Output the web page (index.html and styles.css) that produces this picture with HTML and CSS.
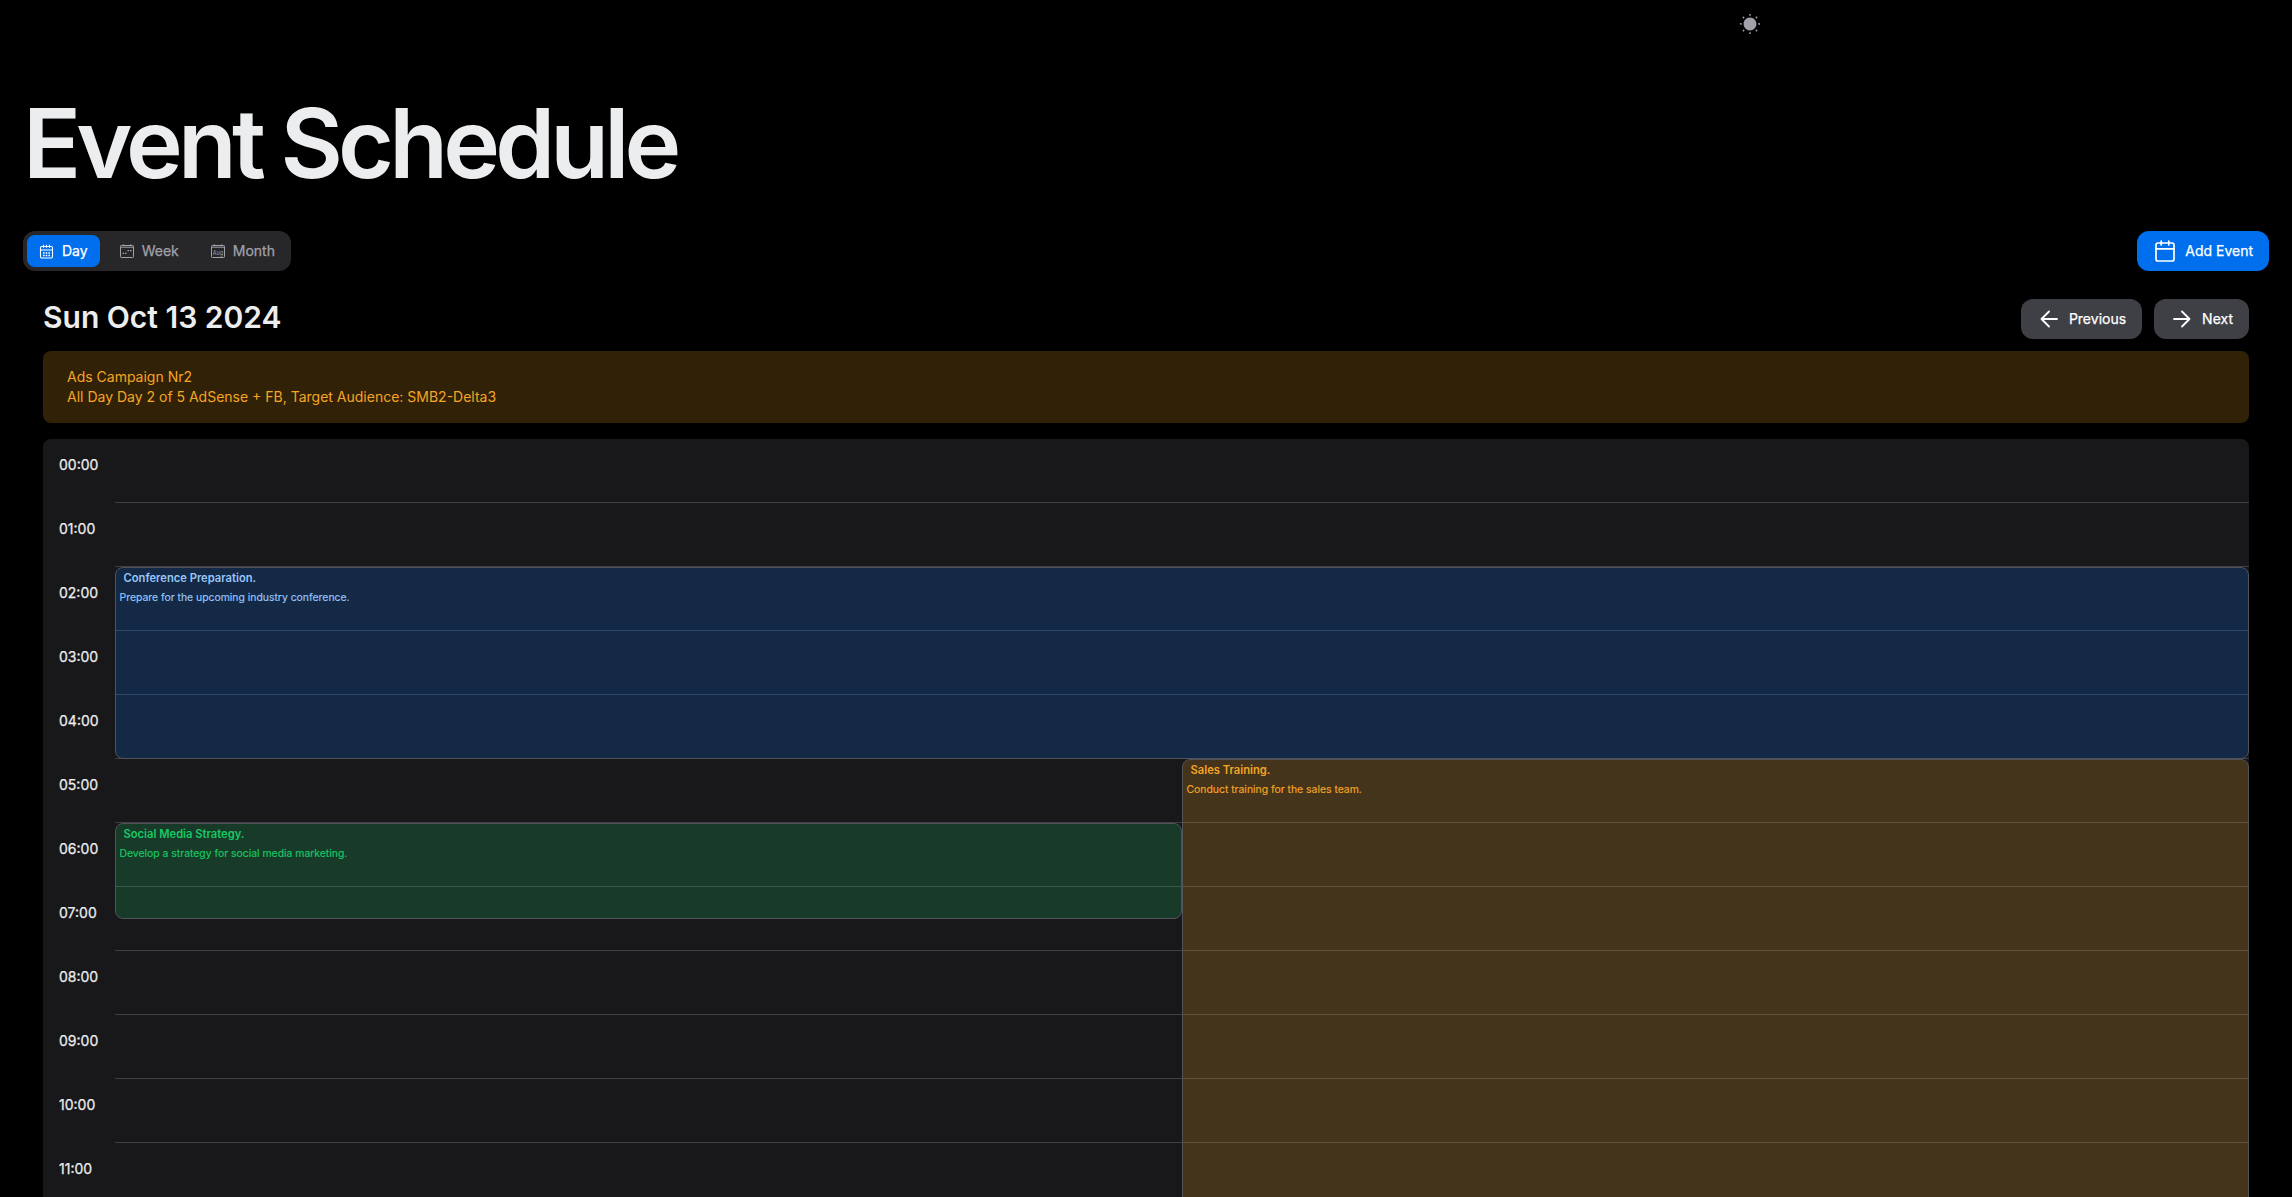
FILE: index.html
```
<!DOCTYPE html>
<html lang="en">
<head>
<meta charset="utf-8">
<title>Event Schedule</title>
<link rel="stylesheet" href="styles.css">
</head>
<body>
<header class="topbar">
  <svg class="sun" viewBox="0 0 24 24" width="22" height="22"><path d="M19 12c0 3.87-3.13 7-7 7s-7-3.13-7-7 3.130-7 7-7 7 3.130 7 7zM12 22.960c-.55 0-1-.41-1-.96v-.08c0-.55.45-1 1-1s1 .45 1 1-.45 1.040-1 1.040zm7.140-2.820c-.26 0-.51-.1-.71-.29l-.13-.13a.996.996 0 1 1 1.410-1.410l.13.13a.996.996 0 0 1-.7 1.700zm-14.280 0c-.26 0-.51-.1-.71-.29a.996.996 0 0 1 0-1.410l.13-.13a.996.996 0 1 1 1.410 1.410l-.13.13c-.19.19-.45.29-.7.29zM22 13h-.08c-.55 0-1-.45-1-1s.45-1 1-1 1.040.45 1.040 1-.41 1-.96 1zM2.080 13H2c-.55 0-1-.45-1-1s.45-1 1-1 1.040.45 1.040 1-.41 1-.96 1zm16.930-7.010c-.26 0-.51-.1-.71-.29a.996.996 0 0 1 0-1.410l.13-.13a.996.996 0 1 1 1.410 1.410l-.13.13c-.19.19-.44.29-.7.29zm-14.020 0c-.26 0-.51-.1-.71-.29l-.13-.14a.996.996 0 1 1 1.410-1.410l.13.13c.39.39.39 1.020 0 1.410-.19.2-.45.3-.7.3zM12 3.040c-.55 0-1-.41-1-.96V2c0-.55.45-1 1-1s1 .45 1 1-.45 1.040-1 1.040z" fill="currentColor"/></svg>
</header>
<main class="page">
  <h1 class="title">Event Schedule</h1>
  <div class="toolbar">
    <div class="tabs">
      <button class="tab active">
        <svg class="tab-icon day-icon" viewBox="0 0 15 15" fill="none" stroke="currentColor" stroke-width="1.100"><rect x="1.500" y="2.500" width="12" height="11.500" rx="1.200"/><path d="M1.500 6h12M4.500 .8v3M7.500 .8v3M10.500 .8v3"/><path d="M4 9h1.600M6.700 9h1.600M9.400 9H11M4 11.500h1.600M6.700 11.500h1.600M9.400 11.500H11" stroke-width="1.300"/></svg>
        <span>Day</span>
      </button>
      <button class="tab">
        <svg class="tab-icon" viewBox="0 0 14 14" fill="none" stroke="currentColor"><rect x=".5" y="1.500" width="13" height="12" rx=".8"/><path d="M.5 3.200h13M3.300 .3v1.500M10.700 .3v1.500"/><path d="M2.600 9.300h1.500M5.100 9.300h1.500M7.500 6.700H9M10 6.700h1.500" stroke-width="1.300"/></svg>
        <span>Week</span>
      </button>
      <button class="tab">
        <svg class="tab-icon" viewBox="0 0 14 14" fill="none" stroke="currentColor"><rect x=".5" y="1.500" width="13" height="12" rx=".8"/><path d="M.5 3.200h13M3.300 .3v1.500M10.700 .3v1.500"/><text class="icon-text" x="7" y="10.500" text-anchor="middle" textLength="10.300" lengthAdjust="spacingAndGlyphs">Aug</text></svg>
        <span>Month</span>
      </button>
    </div>
    <button class="btn primary">
      <svg width="24" height="24" viewBox="0 0 24 24" fill="none" stroke="currentColor" stroke-width="1.700" stroke-linejoin="round" stroke-linecap="round"><rect x="3" y="4" width="18" height="18" rx="2"/><path d="M3 9.800h18M8.200 2v4M15.800 2v4"/></svg>
      <span>Add Event</span>
    </button>
  </div>
  <section class="day">
    <div class="day-head">
      <h2 class="date">Sun Oct 13 2024</h2>
      <div class="nav">
        <button class="btn">
          <svg width="24" height="24" viewBox="0 0 24 24" fill="none" stroke="currentColor" stroke-width="1.800" stroke-linecap="round" stroke-linejoin="round"><path d="M20 12H4.500M12 4.500L4.500 12l7.500 7.500"/></svg>
          <span>Previous</span>
        </button>
        <button class="btn">
          <svg width="24" height="24" viewBox="0 0 24 24" fill="none" stroke="currentColor" stroke-width="1.800" stroke-linecap="round" stroke-linejoin="round"><path d="M4 12h15.500M12 4.500l7.500 7.500-7.500 7.500"/></svg>
          <span>Next</span>
        </button>
      </div>
    </div>
    <div class="all-day">
      <div>Ads Campaign Nr2</div>
      <div>All Day Day 2 of 5 AdSense + FB, Target Audience: SMB2-Delta3</div>
    </div>
    <div class="calendar">
      <div class="hours">
        <div class="hour">00:00</div><div class="hour">01:00</div><div class="hour">02:00</div><div class="hour">03:00</div><div class="hour">04:00</div><div class="hour">05:00</div><div class="hour">06:00</div><div class="hour">07:00</div><div class="hour">08:00</div><div class="hour">09:00</div><div class="hour">10:00</div><div class="hour">11:00</div>
      </div>
      <div class="slots">
        <div class="slot"></div><div class="slot"></div><div class="slot"></div><div class="slot"></div><div class="slot"></div><div class="slot"></div><div class="slot"></div><div class="slot"></div><div class="slot"></div><div class="slot"></div><div class="slot"></div><div class="slot"></div>
        <article class="event blue"><h3>Conference Preparation.</h3><p>Prepare for the upcoming industry conference.</p></article>
        <article class="event green"><h3>Social Media Strategy.</h3><p>Develop a strategy for social media marketing.</p></article>
        <article class="event orange"><h3>Sales Training.</h3><p>Conduct training for the sales team.</p></article>
      </div>
    </div>
  </section>
</main>
</body>
</html>
```
FILE: styles.css
```
* { box-sizing: border-box; }
html { overflow: hidden; }
body {
  margin: 0;
  height: 1197px;
  overflow: hidden;
  background: #000;
  color: #ecedee;
  font-family: Inter, "Liberation Sans", sans-serif;
  font-size: 14px;
  line-height: 20px;
}
h1, h2, h3, p { margin: 0; }
button {
  border: 0;
  font: inherit;
  color: inherit;
  display: flex;
  align-items: center;
}
.topbar { height: 48px; padding: 13px 0 0 1739px; }
.sun { display: block; color: #a1a1aa; }
.page { padding: 47px 23px 0; }
.title {
  font-size: 96px;
  line-height: 96px;
  font-weight: 600;
  letter-spacing: -0.05em;
}
.toolbar {
  display: flex;
  justify-content: space-between;
  margin-top: 40px;
}
.tabs {
  display: flex;
  gap: 8px;
  height: 40px;
  padding: 4px;
  border-radius: 12px;
  background: #27272a;
}
.tab {
  height: 32px;
  padding: 0 12px;
  gap: 8px;
  border-radius: 8px;
  background: none;
  color: #a1a1aa;
}
.tab.active { background: #006fee; color: #fff; }
.tab-icon { width: 14px; height: 14px; }
.tab-icon.day-icon { width: 15px; height: 15px; }
.icon-text { font-size: 6.5px; fill: currentColor; stroke: none; }
.tab span, .btn span, .hour { -webkit-text-stroke: 0.25px currentColor; }
.btn {
  height: 40px;
  padding: 0 16px;
  gap: 8px;
  border-radius: 12px;
  background: #3f3f46;
  color: #fff;
}
.btn.primary { background: #006fee; }
.day { padding: 28px 20px 0; }
.day-head { display: flex; justify-content: space-between; }
.date { font-size: 30px; line-height: 36px; font-weight: 600; }
.nav { display: flex; gap: 12px; }
.all-day {
  height: 72px;
  margin-top: 12px;
  padding: 16px 24px;
  border-radius: 8px;
  background: rgba(245, 165, 36, .2);
  color: #f5a524;
}
.calendar {
  display: flex;
  height: 758px;
  overflow: hidden;
  margin-top: 16px;
  border-radius: 8px 8px 0 0;
  background: #18181b;
}
.hours { width: 72px; padding-left: 16px; }
.hour { height: 64px; padding-top: 16px; }
.slots { position: relative; flex: 1; }
.slot { height: 64px; border-bottom: 1px solid #3f3f46; }
.event {
  position: absolute;
  padding: 2px 3.5px;
  border: 1px solid #52525b;
  border-radius: 8px;
}
.event h3 { padding-left: 4px; font-size: 11.2px; line-height: 16px; font-weight: 600; }
.event p { margin-top: 4px; font-size: 10.4px; line-height: 16px; -webkit-text-stroke: 0.15px currentColor; }
.blue { top: 128px; left: 0; width: 100%; height: 192px; background: rgba(0, 111, 238, .2); color: #99c7fb; }
.green { top: 384px; left: 0; width: 50%; height: 96px; background: rgba(23, 201, 100, .2); color: #17c964; }
.orange { top: 320px; left: 50%; width: 50%; height: 640px; background: rgba(245, 165, 36, .2); color: #f5a524; }
```
